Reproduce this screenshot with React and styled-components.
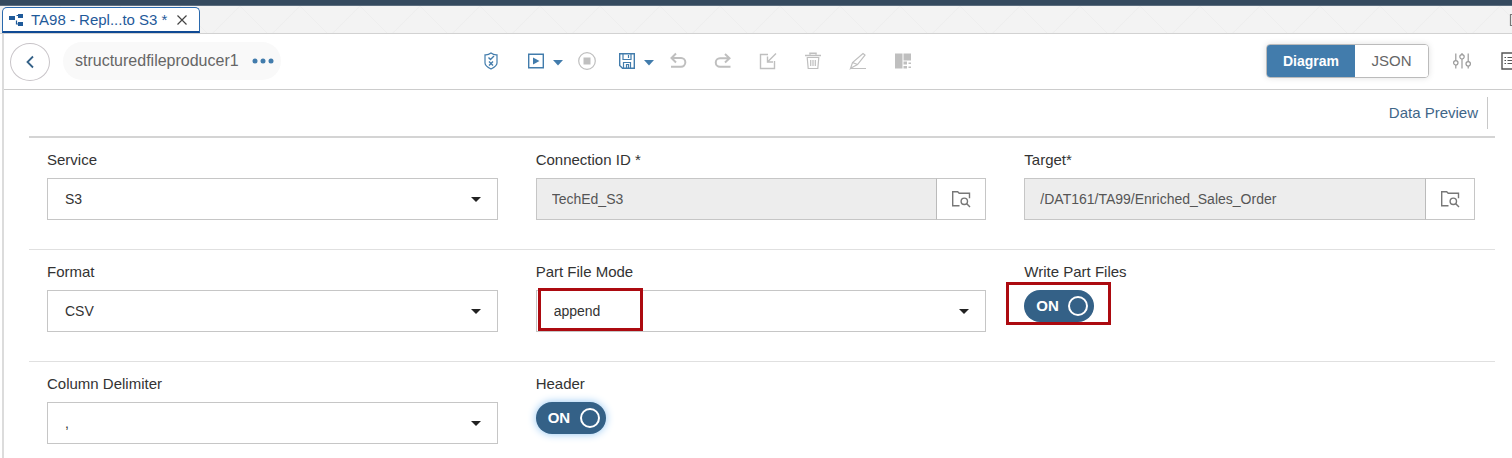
import React, { useState } from "react";
import styled, { createGlobalStyle, css } from "styled-components";

const GlobalStyle = createGlobalStyle`
  *, *::before, *::after { box-sizing: border-box; }
  body {
    margin: 0;
    background: #fff;
    color: #333;
    font-family: "Liberation Sans", Arial, sans-serif;
    font-size: 15px;
    line-height: 18px;
    overflow-x: hidden;
  }
  button, input, select { font: inherit; color: inherit; }
  svg { flex: none; }
`;

const Page = styled.div`
  min-height: 100vh;
  display: flex;
  flex-direction: column;
  overflow: hidden;
`;

const ShellBar = styled.div`
  height: 6px;
  background: #354a5f;
  border-bottom: 1px solid #5c6d7e;
`;

const TabStrip = styled.nav`
  height: 28px;
  display: flex;
  align-items: flex-end;
  justify-content: space-between;
  padding-left: 2px;
  overflow: hidden;
  border-bottom: 1px solid #d2d2d2;
  background-color: #f3f3f3;
  background-image:
    linear-gradient(45deg, transparent 49%, #eeeeee 50%, transparent 51%),
    linear-gradient(-45deg, transparent 49%, #eeeeee 50%, transparent 51%);
  background-size: 60px 60px;
`;

const Tab = styled.div`
  height: 26px;
  width: 198px;
  display: flex;
  align-items: center;
  padding-left: 5px;
  background: #fff;
  border: 1px solid #2a69ad;
  border-bottom: 2px solid #0f4a94;
  border-radius: 5px 5px 0 0;
  color: #1f5a9a;
`;

const TabLink = styled.a`
  display: flex;
  align-items: center;
  gap: 7px;
  color: inherit;
  text-decoration: none;
  white-space: pre;
`;

const PlainButton = styled.button`
  display: flex;
  align-items: center;
  justify-content: center;
  flex: none;
  padding: 0;
  border: 0;
  background: none;
  cursor: pointer;
`;

const CloseButton = styled(PlainButton)`
  margin-left: 9px;
  color: #444;
`;

const StripButton = styled(PlainButton)`
  align-self: center;
  width: 16px;
  margin-right: -12px;
  color: #777;
`;

const Workspace = styled.main`
  flex: 1;
  margin-left: 2px;
  border-left: 2px solid #dcdcdc;
`;

const Toolbar = styled.header`
  height: 56px;
  display: flex;
  align-items: center;
  justify-content: space-between;
  padding: 0 0 2px 6px;
  overflow: hidden;
  border-bottom: 1px solid #ccc;
`;

const Group = styled.div`
  flex: ${(p) => (p.$grow ? `${p.$grow} 1 0` : "none")};
  display: flex;
  align-items: center;
  justify-content: ${(p) => (p.$end ? "flex-end" : "flex-start")};
  gap: ${(p) => p.$gap || 0}px;
`;

const BackButton = styled(PlainButton)`
  width: 40px;
  height: 38px;
  margin-top: 2px;
  border: 1px solid #c8c4c8;
  border-radius: 50%;
  color: #346187;
`;

const NodeName = styled.div`
  height: 38px;
  display: flex;
  align-items: center;
  gap: 13px;
  padding: 0 7px 0 12px;
  border-radius: 19px;
  background: #f9f9f9;
  color: #666;
  font-size: 16px;
`;

const ToolButton = styled(PlainButton)`
  width: ${(p) => p.$w || 20}px;
  height: 24px;
  color: ${(p) => (p.disabled ? "#bfbfbf" : "#427cac")};
`;

const SettingsButton = styled(PlainButton)`
  width: 14px;
  height: 24px;
  color: #999;
`;

const PanelButton = styled(PlainButton)`
  width: 32px;
  height: 24px;
  margin-right: -15px;
  color: #555;
`;

const Segments = styled.div`
  display: flex;
  height: 34px;
  border: 1px solid #bbb;
  border-radius: 4px;
  overflow: hidden;
  box-shadow: 0 0 6px rgba(0, 0, 0, 0.12);
`;

const Segment = styled.button`
  width: ${(p) => p.$w}px;
  padding: 0;
  border: 0;
  background: #fff;
  color: #666;
  cursor: pointer;
  ${(p) =>
    p.$active &&
    css`
      background: #427cac;
      color: #fff;
      font-size: 14px;
      font-weight: bold;
    `}
`;

const Content = styled.div`
  padding: 0 17px 0 25px;
`;

const PreviewBar = styled.div`
  height: 48px;
  display: flex;
  align-items: center;
  justify-content: flex-end;
  padding-right: 7px;
  border-bottom: 2px solid #d4d4d4;
`;

const PreviewLink = styled.a`
  display: flex;
  align-items: center;
  height: 32px;
  padding-right: 9px;
  border-right: 1px solid #c8c8c8;
  color: #3f6688;
  text-decoration: none;
`;

const FormRow = styled.section`
  display: grid;
  grid-template-columns: repeat(3, minmax(0, 1fr));
  column-gap: 38px;
  padding: 13px 20px 29px 18px;
  border-bottom: 1px solid #e0e0e0;
  &:last-child { border-bottom: 0; padding-bottom: 0; }
`;

const Field = styled.div`
  display: flex;
  flex-direction: column;
  align-items: stretch;
  gap: 9px;
`;

const Label = styled.label`
  align-self: flex-start;
  color: #333;
`;

const Control = styled.div`
  position: relative;
  display: flex;
  align-items: center;
`;

const Select = styled.select`
  appearance: none;
  width: 100%;
  height: 42px;
  padding: 0 40px 0 17px;
  border: 1px solid #c6c6c6;
  border-radius: 0;
  background: #fff;
  font-size: 14px;
`;

const SelectArrow = styled.svg`
  position: absolute;
  right: 17px;
  pointer-events: none;
`;

const ReadOnlyInput = styled.input`
  flex: 1;
  min-width: 0;
  height: 42px;
  padding: 0 15px;
  border: 1px solid #c6c6c6;
  border-radius: 0;
  background: #ededed;
  color: #555;
  font-size: 14px;
`;

const BrowseButton = styled(PlainButton)`
  width: 50px;
  height: 42px;
  border: 1px solid #c6c6c6;
  border-left: 1px solid #bbb;
  margin-left: -1px;
  color: #777;
`;

const Switch = styled.label`
  width: 70px;
  height: 32px;
  display: flex;
  align-items: center;
  justify-content: space-between;
  padding: 0 6px 0 12px;
  border-radius: 16px;
  background: #346187;
  color: #fff;
  font-weight: bold;
  cursor: pointer;
  box-shadow: ${(p) => (p.$glow ? "0 0 8px #8fc4f2" : "none")};
`;

const SwitchInput = styled.input`
  appearance: none;
  width: 20px;
  height: 20px;
  margin: 0;
  border: 2px solid #fff;
  border-radius: 50%;
  outline: none;
`;

const Highlight = styled.span`
  position: absolute;
  top: ${(p) => p.$top}px;
  left: ${(p) => p.$left}px;
  width: 105px;
  height: 43px;
  border: 3px solid #ac0a10;
  pointer-events: none;
`;

const Svg = ({ w = 18, h = 18, children }) => (
  <svg width={w} height={h} viewBox={`0 0 ${w} ${h}`} fill="none" stroke="currentColor" strokeWidth="1.2" aria-hidden="true">
    {children}
  </svg>
);

const GraphIcon = () => (
  <Svg w={16} h={14}>
    <g fill="currentColor" stroke="none">
      <rect x="1" y="3" width="6" height="4" />
      <rect x="10" y="1" width="5" height="4" />
      <rect x="10" y="9" width="5" height="4" />
    </g>
    <path d="M10 2.500H8.500M8.500 7.500V11H10" />
  </Svg>
);
const CloseIcon = () => <Svg w={12} h={12}><path d="M1.500 1.500l9 9M10.500 1.500l-9 9" /></Svg>;
const WindowIcon = () => <Svg w={14} h={14}><path d="M1.500 1.500h11v11h-11z" /></Svg>;
const BackIcon = () => <Svg w={10} h={14}><path d="M8 1.500L2.500 7l5.500 5.500" strokeWidth="1.800" /></Svg>;
const DotsIcon = () => (
  <Svg w={22} h={6}>
    <g fill="#427cac" stroke="none">
      <circle cx="3" cy="3" r="2.500" /><circle cx="11" cy="3" r="2.500" /><circle cx="19" cy="3" r="2.500" />
    </g>
  </Svg>
);
const ShieldIcon = () => (
  <Svg>
    <path d="M9 1c2 1.500 4 2 6 1.800V11c0 2.500-3 4.500-6 6-3-1.500-6-3.500-6-6V2.800C5 3 7 2.500 9 1z" />
    <path d="M6.500 5.500l2 2 3.500-3.500M7 9.500l4 4M11 9.500l-4 4" strokeWidth="1.400" />
  </Svg>
);
const RunIcon = () => <Svg><path d="M1.700 2.200h14.600v13.600H1.700z" strokeWidth="1.400" /><path d="M6 5.500v7L12.500 9z" fill="currentColor" stroke="none" /></Svg>;
const DownIcon = () => <Svg w={10} h={10}><path d="M0 4h10L5 9.500z" fill="currentColor" stroke="none" /></Svg>;
const StopIcon = () => <Svg><circle cx="9" cy="9" r="8.300" /><path d="M5.500 5.500h7v7h-7z" fill="currentColor" stroke="none" /></Svg>;
const SaveIcon = () => (
  <Svg>
    <path d="M1.700 1.700h14.600v14.600H4.500L1.700 13.500z" strokeWidth="1.400" />
    <path d="M5 2v5.500h8V2M10.500 3v3M5.500 16v-5.500h7V16M8.500 16v-3.500h2V16" />
  </Svg>
);
const UndoIcon = () => <Svg><path d="M7 1.500L2.500 6 7 10.500M2.500 6H12a4.300 4.300 0 0 1 0 8.700H2" strokeWidth="2" /></Svg>;
const RedoIcon = () => <Svg><path d="M11 2l4.500 4.200L11 10.500M15.500 6.200H6A4.200 4.200 0 0 0 6 14.700h10.500" strokeWidth="2" /></Svg>;
const ImportIcon = () => <Svg><path d="M9 2.500H1.500v14h14V9M17 1.500L8.500 10M8.500 4.500V10H14" strokeWidth="1.400" /></Svg>;
const TrashIcon = () => (
  <Svg>
    <path d="M1 3.500h16M6 2.500V1.200h6v1.300" strokeWidth="1.500" />
    <path d="M2.700 5.500h12.600M3.200 5.500l1 11h9.600l1-11M6.700 8v6M9 8v6M11.300 8v6" />
  </Svg>
);
const PenIcon = () => <Svg><path d="M14 1.500l2 1.500-7.500 9.500L3 15.500l-1.500 1 2-6zM3.500 10.500l5 2M1.500 16.500H17" /></Svg>;
const LayoutIcon = () => (
  <Svg>
    <path d="M1 1.500h7.500v15H1zM9.500 1.500H17v7H9.500zM9.500 9.500h3.500v3H9.500zM9.500 14h3.500v2.500H9.500zM14.500 10.500H17v1.500h-2.500zM14.500 14.500H17V16h-2.500z" fill="currentColor" stroke="none" />
  </Svg>
);
const SlidersIcon = () => (
  <Svg>
    <path d="M2.800 1.500v7M2.800 13v3.500M9 1v1.500M9 7v9.500M15.200 1.500v8M15.200 14v2.500" />
    <circle cx="2.800" cy="10.800" r="2.200" /><circle cx="9" cy="4.800" r="2.200" /><circle cx="15.200" cy="11.800" r="2.200" />
  </Svg>
);
const ListIcon = () => (
  <Svg w={20} h={18}>
    <path d="M1 1h18v16H1z" strokeWidth="1.400" />
    <path d="M3.500 5.500h1.500M3.500 8.500h1.500M3.500 11.500h1.500M6.500 5.500h10M6.500 8.500h10M6.500 11.500h10" />
  </Svg>
);
const BrowseIcon = () => (
  <Svg w={20} h={18}>
    <path d="M8.500 15.700H1.700V1.700h5l1.500 1.500h10.300v5" strokeWidth="1.400" />
    <circle cx="13.300" cy="11.300" r="3.200" strokeWidth="1.400" />
    <path d="M15.500 13.500l3.500 3.500" strokeWidth="1.400" />
  </Svg>
);

const SelectField = ({ id, label, options, marked }) => (
  <Field>
    <Label htmlFor={id}>{label}</Label>
    <Control>
      <Select id={id}>{options.map((o) => <option key={o}>{o}</option>)}</Select>
      <SelectArrow width="10" height="5" viewBox="0 0 10 5" aria-hidden="true">
        <path d="M0 0h10L5 5z" fill="#222" />
      </SelectArrow>
      {marked && <Highlight $top={-2} $left={2} />}
    </Control>
  </Field>
);

const BrowseField = ({ id, label, value }) => (
  <Field>
    <Label htmlFor={id}>{label}</Label>
    <Control>
      <ReadOnlyInput id={id} value={value} readOnly />
      <BrowseButton type="button" aria-label={`Browse ${label}`}><BrowseIcon /></BrowseButton>
    </Control>
  </Field>
);

const SwitchField = ({ id, label, marked, glow }) => {
  const [on, setOn] = useState(true);
  return (
    <Field>
      <Label htmlFor={id}>{label}</Label>
      <Control>
        <Switch $glow={glow}>
          {on ? "ON" : "OFF"}
          <SwitchInput id={id} type="checkbox" checked={on} onChange={() => setOn(!on)} />
        </Switch>
        {marked && <Highlight $top={-8} $left={-18} />}
      </Control>
    </Field>
  );
};

export default function App() {
  const [view, setView] = useState("Diagram");
  return (
    <Page>
      <GlobalStyle />
      <ShellBar />
      <TabStrip>
        <Tab>
          <TabLink href="#graph"><GraphIcon />TA98 - Repl...to S3 *</TabLink>
          <CloseButton type="button" aria-label="Close tab"><CloseIcon /></CloseButton>
        </Tab>
        <StripButton type="button" aria-label="Windows"><WindowIcon /></StripButton>
      </TabStrip>
      <Workspace>
        <Toolbar>
          <Group $grow={11} $gap={13}>
            <BackButton type="button" aria-label="Back"><BackIcon /></BackButton>
            <NodeName>
              structuredfileproducer1
              <PlainButton type="button" aria-label="More"><DotsIcon /></PlainButton>
            </NodeName>
          </Group>
          <Group $gap={13}>
            <Group $gap={25}>
              <ToolButton type="button" aria-label="Validate"><ShieldIcon /></ToolButton>
              <Group $gap={6}>
                <ToolButton type="button" aria-label="Run"><RunIcon /></ToolButton>
                <ToolButton type="button" $w={12} aria-label="Run options"><DownIcon /></ToolButton>
              </Group>
            </Group>
            <Group $gap={20}>
              <ToolButton type="button" disabled aria-label="Stop"><StopIcon /></ToolButton>
              <Group $gap={6}>
                <ToolButton type="button" aria-label="Save"><SaveIcon /></ToolButton>
                <ToolButton type="button" $w={12} aria-label="Save options"><DownIcon /></ToolButton>
              </Group>
            </Group>
            <Group $gap={25}>
              <ToolButton type="button" disabled aria-label="Undo"><UndoIcon /></ToolButton>
              <ToolButton type="button" disabled aria-label="Redo"><RedoIcon /></ToolButton>
              <ToolButton type="button" disabled aria-label="Import"><ImportIcon /></ToolButton>
              <ToolButton type="button" disabled aria-label="Delete"><TrashIcon /></ToolButton>
              <ToolButton type="button" disabled aria-label="Edit"><PenIcon /></ToolButton>
              <ToolButton type="button" disabled aria-label="Layout"><LayoutIcon /></ToolButton>
            </Group>
          </Group>
          <Group $grow={14} $end $gap={26}>
            <Segments>
              <Segment type="button" $w={88} $active={view === "Diagram"} onClick={() => setView("Diagram")}>Diagram</Segment>
              <Segment type="button" $w={73} $active={view === "JSON"} onClick={() => setView("JSON")}>JSON</Segment>
            </Segments>
            <SettingsButton type="button" aria-label="Settings"><SlidersIcon /></SettingsButton>
            <PanelButton type="button" aria-label="Details"><ListIcon /></PanelButton>
          </Group>
        </Toolbar>
        <Content>
          <PreviewBar><PreviewLink href="#preview">Data Preview</PreviewLink></PreviewBar>
          <FormRow>
            <SelectField id="service" label="Service" options={["S3"]} />
            <BrowseField id="connection" label="Connection ID *" value="TechEd_S3" />
            <BrowseField id="target" label="Target*" value="/DAT161/TA99/Enriched_Sales_Order" />
          </FormRow>
          <FormRow>
            <SelectField id="format" label="Format" options={["CSV"]} />
            <SelectField id="mode" label="Part File Mode" options={["append"]} marked />
            <SwitchField id="parts" label="Write Part Files" marked />
          </FormRow>
          <FormRow>
            <SelectField id="delimiter" label="Column Delimiter" options={[","]} />
            <SwitchField id="header" label="Header" glow />
          </FormRow>
        </Content>
      </Workspace>
    </Page>
  );
}
